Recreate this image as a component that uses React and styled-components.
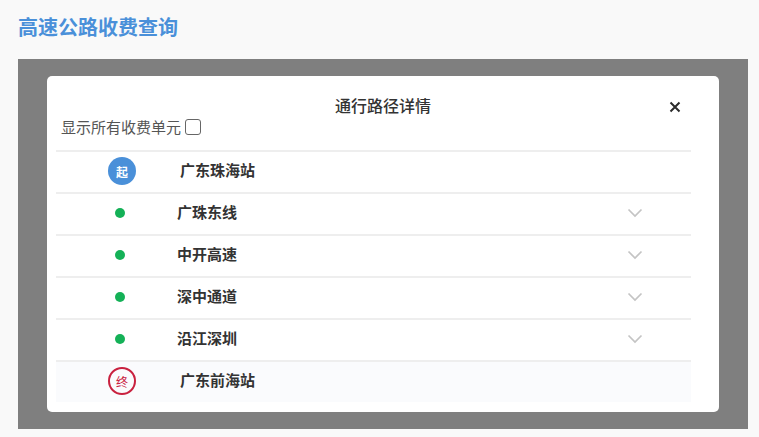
import React from 'react'
import styled, { createGlobalStyle } from 'styled-components'

const GlobalStyle = createGlobalStyle`
  html, body {
    margin: 0;
    padding: 0;
    background: #f9f9f9;
    font-family: "Noto Sans CJK SC", "Liberation Sans", sans-serif;
  }
  * {
    box-sizing: border-box;
  }
`

const Page = styled.div`
  width: 759px;
  height: 437px;
  padding: 12px 11px 8px 18px;
  overflow: hidden;
`
const PageTitle = styled.h1`
  margin: 0 0 17px;
  height: 30px;
  font-size: 20px;
  line-height: 30px;
  font-weight: bold;
  color: #4a90d9;
`
const Overlay = styled.div`
  height: 370px;
  padding: 17px 29px;
  background-color: #7f7f7f;
`
const Modal = styled.div`
  height: 336px;
  padding: 0 28px 0 9px;
  background-color: #fff;
  border-radius: 5px;
`
const ModalHead = styled.div`
  position: relative;
  height: 74px;
`
const ModalTitle = styled.div`
  padding-top: 17px;
  margin-left: -9px;
  margin-right: -28px;
  height: 41px;
  font-size: 16px;
  line-height: 24px;
  font-weight: 500;
  color: #333;
  text-align: center;
`
const CloseButton = styled.button`
  position: absolute;
  top: 24px;
  right: 9px;
  width: 14px;
  height: 14px;
  padding: 0;
  border: 0;
  background: none;
  color: #2b2b2b;
  display: flex;
`
const ShowAll = styled.label`
  display: flex;
  align-items: center;
  margin: 0 0 0 5px;
  font-size: 15px;
  line-height: 20px;
  color: #555;
`
const Checkbox = styled.span`
  width: 16px;
  height: 16px;
  margin: 0 0 0 4px;
  border: 1px solid #666;
  border-radius: 3px;
  background: #fff;
`
const Row = styled.div`
  display: flex;
  align-items: center;
  height: 42px;
  border-top: 2px solid #eeeeee;
  padding: 0 0 2px 44px;
  background-color: ${p => (p.$end ? '#fafbfd' : 'transparent')};
`
const MarkerCell = styled.div`
  width: 40px;
  display: flex;
  justify-content: center;
  flex-shrink: 0;
`
const StationBadge = styled.div`
  width: 28px;
  height: 28px;
  margin-left: 4px;
  border-radius: 50%;
  display: flex;
  align-items: center;
  justify-content: center;
  font-size: 12px;
  font-weight: ${p => (p.$end ? 'normal' : 'bold')};
  color: ${p => (p.$end ? '#c9213f' : '#fff')};
  background-color: ${p => (p.$end ? 'transparent' : '#4a90d9')};
  border: ${p => (p.$end ? '2px solid #c9213f' : 'none')};
`
const Dot = styled.div`
  width: 10px;
  height: 10px;
  border-radius: 50%;
  background-color: #14b157;
`
const RowName = styled.div`
  flex: 1;
  padding-left: ${p => (p.$station ? '40px' : '37px')};
  padding-bottom: 3px;
  font-size: 15px;
  line-height: 22px;
  font-weight: bold;
  color: #333;
`
const Chevron = styled.svg`
  width: 16px;
  height: 10px;
  margin-right: 48px;
  fill: none;
  stroke: #c4c4c4;
  stroke-width: 1.7;
`

const roads = ['广珠东线', '中开高速', '深中通道', '沿江深圳']

const App = () => {
  return (
    <Page>
      <GlobalStyle />
      <PageTitle>高速公路收费查询</PageTitle>
      <Overlay>
        <Modal>
          <ModalHead>
            <ModalTitle>通行路径详情</ModalTitle>
            <CloseButton aria-label="关闭">
              <svg width="14" height="14" viewBox="0 0 14 14">
                <path d="M2.5 2.5L11.5 11.5M11.5 2.5L2.5 11.5" stroke="currentColor" strokeWidth="2" />
              </svg>
            </CloseButton>
            <ShowAll>
              显示所有收费单元
              <Checkbox />
            </ShowAll>
          </ModalHead>
          <Row>
            <MarkerCell>
              <StationBadge>起</StationBadge>
            </MarkerCell>
            <RowName $station>广东珠海站</RowName>
          </Row>
          {roads.map((road) => {
            return (
              <Row key={road}>
                <MarkerCell>
                  <Dot />
                </MarkerCell>
                <RowName>{road}</RowName>
                <Chevron viewBox="0 0 16 10">
                  <path d="M1.5 1.5L8 8L14.5 1.5" />
                </Chevron>
              </Row>
            )
          })}
          <Row $end>
            <MarkerCell>
              <StationBadge $end>终</StationBadge>
            </MarkerCell>
            <RowName $station>广东前海站</RowName>
          </Row>
        </Modal>
      </Overlay>
    </Page>
  )
}

export default App
